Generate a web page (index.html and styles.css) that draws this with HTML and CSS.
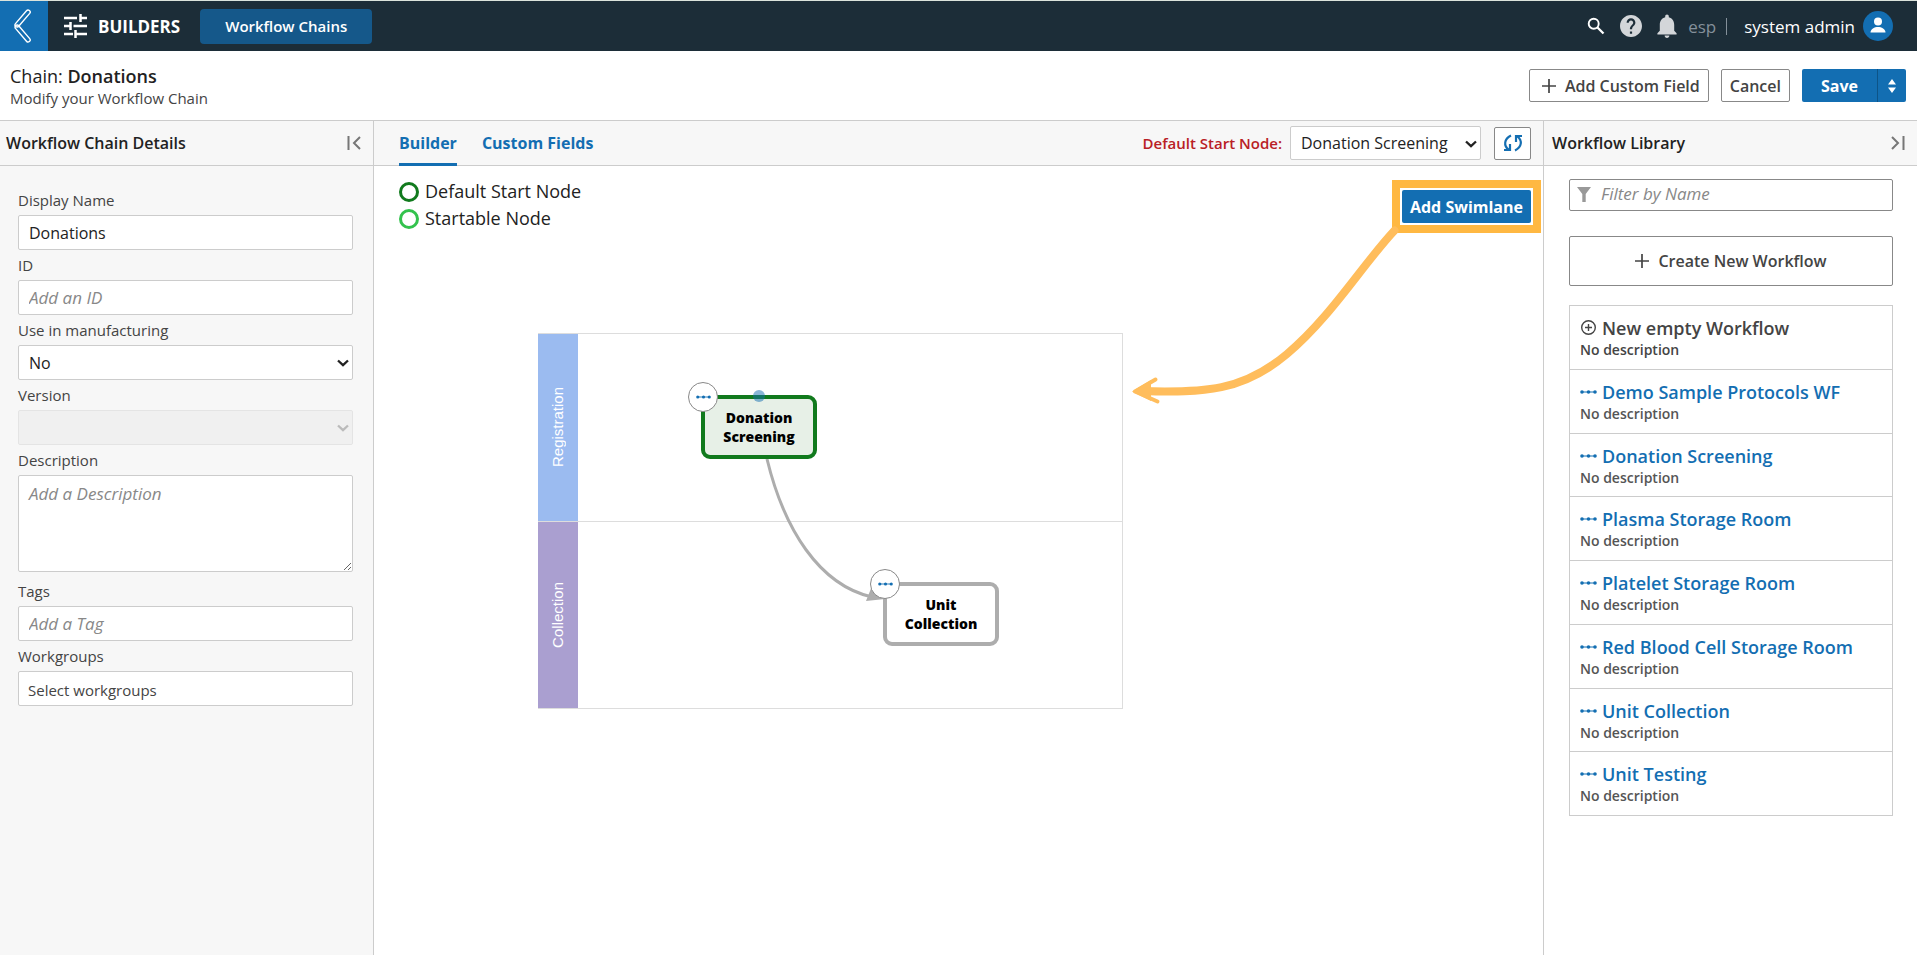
FILE: index.html
```html
<!DOCTYPE html>
<html lang="en">
<head>
<meta charset="utf-8">
<title>Workflow Chain: Donations</title>
<link rel="stylesheet" href="styles.css">
</head>
<body>
<svg class="sprite" aria-hidden="true">
  <symbol id="flow" viewBox="0 0 17 6"><path d="M2 3h13" stroke="currentColor" stroke-width="1"/><circle cx="2" cy="3" r="1.8"/><circle cx="8.5" cy="3" r="1.8"/><circle cx="15" cy="3" r="1.8"/></symbol>
  <symbol id="plus" viewBox="0 0 14 14"><path d="M7 0v14M0 7h14" stroke="currentColor" stroke-width="1.7" fill="none"/></symbol>
  <symbol id="chevron" viewBox="0 0 12 8"><path d="M1 1.5l5 4.7 5-4.7" stroke="currentColor" stroke-width="2.3" fill="none"/></symbol>
</svg>
<div class="app">
  <header class="topbar">
    <button class="back" aria-label="Back"><svg width="18" height="34" viewBox="0 0 18 34" fill="none" stroke="#fff" stroke-width="1.4"><path d="M12.500 1.800a2 2 0 0 1 3.200 2.600L4.700 17.200a2 2 0 0 1-3.200-2.600z"/><path d="M1.500 19.400a2 2 0 0 1 3.200-2.600l11 12.800a2 2 0 0 1-3.200 2.600z"/></svg></button>
    <div class="brand">
      <svg width="24" height="24" viewBox="0 0 24 24" stroke="#fff" stroke-width="2.5"><path d="M0 4h13M16.500 4H23M16.500 0v8M0 12h6.500M9.500 12H23M6.500 8v8M0 20h9M12 20h11M11.500 16v8" fill="none"/></svg>
      <span>BUILDERS</span>
    </div>
    <button class="context">Workflow Chains</button>
    <div class="tools">
      <button class="tool" aria-label="Search"><svg width="18" height="18" viewBox="0 0 18 18" fill="none" stroke="#fff"><circle cx="6.700" cy="6.700" r="5" stroke-width="1.900"/><path d="M10.500 10.500l6 6" stroke-width="2.300"/></svg></button>
      <button class="tool help" aria-label="Help"><svg width="22" height="22" viewBox="2 2 20 20" fill="#d3d6d9"><path d="M12 2C6.480 2 2 6.480 2 12s4.480 10 10 10 10-4.480 10-10S17.520 2 12 2zm1 17h-2v-2h2v2zm2.070-7.750l-.9.920C13.450 12.900 13 13.500 13 15h-2v-.5c0-1.100.450-2.100 1.170-2.830l1.240-1.260c.370-.360.590-.860.590-1.410 0-1.100-.9-2-2-2s-2 .9-2 2H8c0-2.210 1.790-4 4-4s4 1.790 4 4c0 .880-.360 1.680-.930 2.250z"/></svg></button>
      <button class="tool bell" aria-label="Notifications"><svg width="22" height="24" viewBox="3.500 2 17 20" fill="#d3d6d9"><path d="M12 22c1.100 0 2-.9 2-2h-4c0 1.100.9 2 2 2zm6-6v-5c0-3.070-1.630-5.640-4.500-6.320V4c0-.830-.670-1.500-1.500-1.500s-1.500.670-1.500 1.500v.680C7.640 5.360 6 7.920 6 11v5l-2 2v1h16v-1l-2-2z"/></svg></button>
      <span class="tenant">esp<i class="bar"></i></span>
      <button class="user">system admin
        <svg width="30" height="30" viewBox="0 0 30 30"><circle cx="15" cy="15" r="15" fill="#136eb2"/><circle cx="15" cy="10.500" r="4" fill="#fff"/><path d="M7.500 21.500c0-3.500 4-5.500 7.500-5.500s7.500 2 7.500 5.500z" fill="#fff"/></svg>
      </button>
    </div>
  </header>

  <section class="pagehead">
    <div>
      <h1 class="title">Chain: <b>Donations</b></h1>
      <p class="subtitle">Modify your Workflow Chain</p>
    </div>
    <div class="actions">
      <button class="btn"><svg width="14" height="14"><use href="#plus"/></svg>Add Custom Field</button>
      <button class="btn">Cancel</button>
      <div class="split">
        <button class="save">Save</button>
        <button class="more" aria-label="More save options"><svg width="8" height="14" viewBox="0 0 8 14" fill="#fff"><path d="M4 0l4 5.500H0zM4 14l4-5.500H0z"/></svg></button>
      </div>
    </div>
  </section>

  <main class="columns">
    <aside class="details">
      <div class="panelhead"><h2 class="paneltitle">Workflow Chain Details</h2>
        <button class="collapse" aria-label="Collapse details"><svg width="14" height="14" viewBox="0 0 14 14" fill="none" stroke="#777" stroke-width="2"><path d="M1.500 0v14M13 1L7 7l6 6"/></svg></button></div>
      <form class="form">
        <label for="name">Display Name</label>
        <input id="name" class="field" value="Donations">
        <label for="cid">ID</label>
        <input id="cid" class="field" placeholder="Add an ID">
        <label for="mfg">Use in manufacturing</label>
        <div class="pick"><select id="mfg" class="field"><option>No</option><option>Yes</option></select><svg class="arrow" width="12" height="8"><use href="#chevron"/></svg></div>
        <label for="ver">Version</label>
        <div class="pick off"><select id="ver" class="field" disabled></select><svg class="arrow" width="12" height="8"><use href="#chevron"/></svg></div>
        <label for="desc">Description</label>
        <textarea id="desc" class="field area" placeholder="Add a Description"></textarea>
        <label for="tags">Tags</label>
        <input id="tags" class="field" placeholder="Add a Tag">
        <label for="groups">Workgroups</label>
        <button id="groups" type="button" class="field groups">Select workgroups</button>
      </form>
    </aside>

    <section class="builder">
      <div class="panelhead tabsbar">
        <nav class="tabs"><a href="#builder" class="tab active">Builder</a><a href="#fields" class="tab">Custom Fields</a></nav>
        <div class="start">
          <label for="start">Default Start Node:</label>
          <div class="pick"><select id="start" class="field"><option>Donation Screening</option><option>Unit Collection</option></select><svg class="arrow" width="12" height="8"><use href="#chevron"/></svg></div>
          <button class="refresh" aria-label="Refresh"><svg width="20" height="18" viewBox="0 0 20 18" fill="none" stroke="#136eb2" stroke-width="2.200"><path d="M8 1.500C1 5 .5 11.500 5.500 15.500M1 16h6v-6M12 16.500c7-3.500 7.500-10 2.500-14M19 2h-6v6"/></svg></button>
        </div>
      </div>
      <div class="canvas">
        <div class="canvastop">
          <ul class="legend"><li><i class="ring"></i>Default Start Node</li><li><i class="ring light"></i>Startable Node</li></ul>
          <div class="callout"><button class="addlane">Add Swimlane</button></div>
        </div>
        <div class="pool">
          <div class="lane"><div class="lanename blue"><span>Registration</span></div></div>
          <div class="lane"><div class="lanename purple"><span>Collection</span></div></div>
          <svg class="edges" viewBox="0 0 585 375"><path d="M228 125C245 195 280 251 333 263" fill="none" stroke="#adadad" stroke-width="3"/><path d="M333 252l13 13-19 2z" fill="#adadad"/></svg>
          <div class="node first">Donation<br>Screening<i class="port"></i><button class="handle" aria-label="Donation Screening options"><svg width="15" height="6"><use href="#flow"/></svg></button></div>
          <div class="node second">Unit<br>Collection<button class="handle" aria-label="Unit Collection options"><svg width="15" height="6"><use href="#flow"/></svg></button></div>
        </div>
        <svg class="pointer" width="420" height="260" viewBox="0 0 420 260" fill="none" stroke="#ffbd5c" stroke-linecap="round"><path d="M271.500 64.500C240 98 208 151 164 188S82 227 18 225" stroke-width="8"/><path d="M12 225.500l20.500-12M12 225.500l22.500 10" stroke-width="4"/><path d="M9 225.500L28 214v21z" fill="#ffbd5c" stroke="none"/></svg>
      </div>
    </section>

    <aside class="library">
      <div class="panelhead"><h2 class="paneltitle">Workflow Library</h2>
        <button class="collapse" aria-label="Collapse library"><svg width="14" height="14" viewBox="0 0 14 14" fill="none" stroke="#777" stroke-width="2"><path d="M12.500 0v14M1 1l6 6-6 6"/></svg></button></div>
      <div class="librarybody">
        <label class="filter"><svg width="14" height="15" viewBox="0 0 14 15" fill="#999"><path d="M0 0h14L8.700 7v8H5.300V7z"/></svg><input type="text" placeholder="Filter by Name" aria-label="Filter by Name"></label>
        <button class="create"><svg width="14" height="14"><use href="#plus"/></svg>Create New Workflow</button>
        <ul class="flows">
          <li class="flow new"><a href="#new"><svg width="17" height="16" viewBox="0 0 17 16" fill="none" stroke="currentColor" stroke-width="1.400"><circle cx="8.500" cy="7.500" r="6.800"/><path d="M8.500 4v7M5 7.500h7"/></svg>New empty Workflow</a><p>No description</p></li>
          <li class="flow"><a href="#w1"><svg width="17" height="6"><use href="#flow"/></svg>Demo Sample Protocols WF</a><p>No description</p></li>
          <li class="flow"><a href="#w2"><svg width="17" height="6"><use href="#flow"/></svg>Donation Screening</a><p>No description</p></li>
          <li class="flow"><a href="#w3"><svg width="17" height="6"><use href="#flow"/></svg>Plasma Storage Room</a><p>No description</p></li>
          <li class="flow"><a href="#w4"><svg width="17" height="6"><use href="#flow"/></svg>Platelet Storage Room</a><p>No description</p></li>
          <li class="flow"><a href="#w5"><svg width="17" height="6"><use href="#flow"/></svg>Red Blood Cell Storage Room</a><p>No description</p></li>
          <li class="flow"><a href="#w6"><svg width="17" height="6"><use href="#flow"/></svg>Unit Collection</a><p>No description</p></li>
          <li class="flow"><a href="#w7"><svg width="17" height="6"><use href="#flow"/></svg>Unit Testing</a><p>No description</p></li>
        </ul>
      </div>
    </aside>
  </main>
</div>
</body>
</html>
```
FILE: styles.css
```css
* { box-sizing: border-box; }
body { margin: 0; font-family: "Open Sans", "Noto Sans", sans-serif; font-size: 16px; color: #222; background: #fff; }
button, input, select, textarea { font: inherit; color: inherit; margin: 0; }
button { cursor: pointer; padding: 0; border: 0; background: none; }
h1, h2, p, ul { margin: 0; padding: 0; font-weight: 400; }
ul { list-style: none; }
svg { flex: none; display: block; }
.sprite { position: absolute; width: 0; height: 0; }
.app { min-height: 100vh; display: flex; flex-direction: column; }

.topbar { display: flex; align-items: center; height: 51px; padding-right: 24px; background: #1c2d38; border-top: 1px solid #dbe3dc; color: #fff; }
.back { width: 48px; height: 50px; display: flex; align-items: center; justify-content: center; padding-right: 2px; background: #136eb2; }
.brand { display: flex; align-items: center; gap: 10px; margin-left: 16px; font-size: 17px; font-weight: 700; }
.context { height: 35px; margin-left: 20px; padding: 0 25px; border-radius: 4px; background: #15588a; font-size: 15px; font-weight: 600; }
.tools { display: flex; align-items: center; margin-left: auto; font-size: 17px; }
.help { margin-left: 15px; }
.bell { margin-left: 14px; }
.tenant { display: flex; align-items: center; gap: 10px; margin-left: 10px; color: #84909a; }
.bar { width: 1px; height: 17px; background: #84909a; }
.user { display: flex; align-items: center; gap: 8px; margin-left: 17px; }

.pagehead { display: flex; align-items: center; justify-content: space-between; height: 69px; padding: 0 11px 0 10px; }
.title { font-size: 18px; line-height: 24px; color: #222; }
.title b { font-weight: 600; }
.subtitle { font-size: 15px; line-height: 20px; color: #444; }
.actions { display: flex; gap: 12px; }
.btn { display: flex; align-items: center; gap: 9px; height: 33px; padding: 0 8px; border: 1px solid #888; border-radius: 2px; background: #fff; color: #444; font-weight: 600; }
.btn svg { margin-left: 4px; }
.split { display: flex; border-radius: 2px; overflow: hidden; color: #fff; }
.save { width: 75px; background: #136eb2; font-weight: 700; }
.more { width: 29px; background: #136eb2; border-left: 1px solid #0d5488; display: flex; align-items: center; justify-content: center; }

.columns { flex: 1; display: grid; grid-template-columns: 374px 1fr 374px; border-top: 1px solid #ccc; }
.details { background: #f7f7f7; border-right: 1px solid #ccc; }
.library { border-left: 1px solid #ccc; }
.builder { display: flex; flex-direction: column; min-width: 0; }
.panelhead { display: flex; align-items: center; justify-content: space-between; height: 45px; padding: 0 12px 0 6px; background: #f7f7f7; border-bottom: 1px solid #ccc; }
.library .panelhead { padding-left: 8px; }
.paneltitle { font-size: 16px; font-weight: 600; }

.form { display: flex; flex-direction: column; padding: 19px 20px 20px 18px; }
.form label { height: 30px; padding-top: 4px; font-size: 15px; line-height: 22px; color: #444; }
.field { display: block; width: 100%; height: 35px; padding: 0 10px; border: 1px solid #ccc; border-radius: 2px; background: #fff; color: #222; font-size: 16px; outline: 0; }
.field::placeholder, .filter input::placeholder { color: #888; font-size: 17px; font-style: italic; opacity: 1; }
.area { height: 97px; margin-bottom: 4px; padding-top: 6px; line-height: 24px; resize: vertical; }
.groups { padding: 3px 9px 0; text-align: left; font-size: 15px; color: #444; }
.pick { position: relative; }
.pick select { appearance: none; }
.arrow { position: absolute; right: 4px; top: 14px; color: #222; pointer-events: none; }
.off .arrow { color: #bbb; }
.off .field { background: #eee; border-color: #ddd; }

.tabsbar { padding: 0 12px 0 25px; }
.tabs { display: flex; gap: 25px; align-self: stretch; margin-bottom: -1px; }
.tab { display: flex; align-items: center; border-bottom: 3px solid transparent; padding-top: 2px; color: #136eb2; font-weight: 700; text-decoration: none; }
.active { border-color: #136eb2; }
.start { display: flex; align-items: center; }
.start label { margin-right: 8px; color: #b92025; font-size: 15px; font-weight: 600; }
.start .pick { width: 191px; }
.start .field { height: 34px; }
.refresh { width: 37px; height: 33px; margin-left: 13px; display: flex; align-items: center; justify-content: center; background: #fff; border: 1px solid #888; border-radius: 2px; }

.canvas { position: relative; flex: 1; min-height: 600px; }
.canvastop { display: flex; align-items: flex-start; justify-content: space-between; padding: 12px 2px 0 25px; }
.legend { font-size: 18px; line-height: 27px; }
.legend li { display: flex; align-items: center; gap: 6px; }
.ring { width: 20px; height: 20px; border: 3px solid #117a1d; border-radius: 50%; }
.light { border-color: #33c24d; }
.callout { margin-top: 2px; padding: 2px; border: 8px solid #ffb842; }
.addlane { display: block; height: 33px; padding: 0 8px; border-radius: 2px; background: #136eb2; color: #fff; font-weight: 700; }

.pool { position: absolute; left: 164px; top: 167px; width: 585px; border: 1px solid #ddd; }
.lane { display: flex; height: 187px; }
.lane + .lane { border-top: 1px solid #ddd; }
.lanename { display: flex; align-items: center; justify-content: center; width: 40px; margin-left: -1px; padding-right: 2px; color: #fff; font-family: "Liberation Sans", Arial, sans-serif; font-size: 15px; }
.lanename span { writing-mode: vertical-rl; rotate: 180deg; }
.blue { background: #9bbbf0; }
.purple { background: #aa9fd0; }
.edges { position: absolute; left: 0; top: 0; width: 585px; height: 375px; }
.node { position: absolute; width: 116px; height: 64px; padding-top: 9px; border: 4px solid #adadad; border-radius: 9px; background: #fff; color: #000; font-size: 14px; font-weight: 800; line-height: 19px; text-align: center; }
.first { left: 162px; top: 61px; border-color: #117a1d; background: #e7f0e7; }
.second { left: 344px; top: 248px; }
.handle { position: absolute; left: -17px; top: -17px; width: 30px; height: 30px; display: flex; align-items: center; justify-content: center; border: 1px solid #888; border-radius: 50%; background: #fff; color: #136eb2; fill: #136eb2; }
.port { position: absolute; left: 48px; top: -9px; width: 12px; height: 12px; border-radius: 50%; background: #136eb2; opacity: .5; }
.pointer { position: absolute; right: 0; top: 0; pointer-events: none; }

.librarybody { padding: 13px 24px 20px 25px; }
.filter { display: flex; align-items: center; gap: 10px; height: 32px; padding: 0 7px 2px; border: 1px solid #888; border-radius: 2px; }
.filter input { flex: 1; min-width: 0; border: 0; padding: 0; outline: 0; background: none; }
.create { display: flex; align-items: center; justify-content: center; gap: 9px; width: 100%; height: 50px; margin: 25px 0 19px; border: 1px solid #888; border-radius: 2px; color: #444; font-weight: 600; }
.flows { display: grid; grid-auto-rows: 1fr; min-height: 511px; border: 1px solid #ccc; border-bottom: 0; }
.flow { padding: 10px 10px 0; border-bottom: 1px solid #ccc; }
.flow a { display: flex; align-items: center; gap: 5px; color: #136eb2; fill: #136eb2; font-size: 18px; font-weight: 600; line-height: 24px; text-decoration: none; }
.flow p { color: #555; font-size: 14px; line-height: 19px; font-weight: 600; }
.new a, .new p { color: #444; }
```
